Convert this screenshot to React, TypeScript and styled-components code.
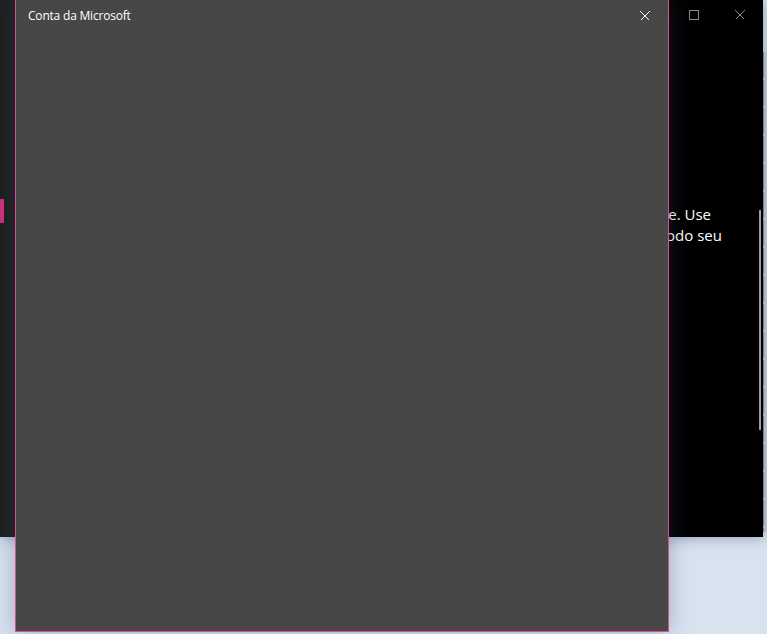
import React from "react";
import styled, { createGlobalStyle } from "styled-components";

const Global = createGlobalStyle`
  html, body { margin: 0; padding: 0; }
  body {
    width: 767px;
    height: 634px;
    overflow: hidden;
    background: #d9e3f0;
    font-family: "Open Sans", "Noto Sans", "DejaVu Sans", sans-serif;
  }
`;

const Desktop = styled.div`
  position: relative;
  width: 767px;
  height: 634px;
  overflow: hidden;
  background: #d9e3f0;
`;

const BackWindow = styled.div`
  position: absolute;
  left: 720px;
  top: 52px;
  width: 60px;
  height: 480px;
  background: #cfd3d8;
  display: flex;
  justify-content: flex-end;
  padding-right: 16px;
  box-sizing: border-box;
`;

const BackRail = styled.div`
  width: 2px;
  height: 100%;
  background: repeating-linear-gradient(
    to bottom,
    #8d9094 0px,
    #8d9094 26px,
    #d0d3d7 26px,
    #d0d3d7 28px
  );
`;

const SettingsWindow = styled.div`
  position: absolute;
  left: 0;
  top: 0;
  width: 763px;
  height: 537px;
  background: #000;
  display: flex;
  box-shadow: 0 0 14px rgba(40, 60, 90, 0.45);
`;

const Sidebar = styled.div`
  position: relative;
  width: 300px;
  background: #1f1f1f;
  flex-shrink: 0;
`;

const ActiveMarker = styled.div`
  position: absolute;
  left: 0;
  top: 199px;
  width: 4px;
  height: 24px;
  background: #d32f7b;
`;

const Content = styled.div`
  position: relative;
  flex: 1;
  display: flex;
  flex-direction: column;
`;

const TitleBar = styled.div`
  height: 30px;
  display: flex;
  justify-content: flex-end;
  align-items: center;
`;

const CaptionButton = styled.div`
  width: 46px;
  height: 30px;
  display: flex;
  align-items: center;
  justify-content: center;
`;

const Body = styled.div`
  padding-top: 174px;
  width: 422px;
  color: #fff;
  font-size: 15px;
  line-height: 21px;
`;

const Line = styled.div<{ $end: number }>`
  text-align: right;
  white-space: nowrap;
  padding-right: ${(p) => p.$end}px;
`;

const Scrollbar = styled.div`
  position: absolute;
  right: 2px;
  top: 210px;
  width: 2px;
  height: 220px;
  background: #9b9b9b;
`;

const Dialog = styled.div`
  position: absolute;
  left: 15px;
  top: -1px;
  width: 654px;
  height: 633px;
  box-sizing: border-box;
  background: #474747;
  border: 1px solid #dc4f8b;
  box-shadow: 0 0 22px rgba(50, 70, 100, 0.35);
  display: flex;
  flex-direction: column;
`;

const DialogTitleBar = styled.div`
  height: 31px;
  display: flex;
  align-items: center;
  justify-content: space-between;
  padding-left: 12px;
`;

const DialogTitle = styled.span`
  color: #fff;
  font-size: 12px;
  letter-spacing: -0.2px;
  margin-top: -1px;
`;

const DialogClose = styled.div`
  width: 46px;
  height: 31px;
  display: flex;
  align-items: center;
  justify-content: center;
`;

const CrossIcon = ({ color }: { color: string }) => (
  <svg width="10" height="10" viewBox="0 0 10 10" shapeRendering="crispEdges">
    <path d="M0.5 0.5 L9.5 9.5 M9.5 0.5 L0.5 9.5" stroke={color} strokeWidth="1" />
  </svg>
);

const SquareIcon = ({ color }: { color: string }) => (
  <svg width="10" height="10" viewBox="0 0 10 10" shapeRendering="crispEdges">
    <rect x="0.5" y="0.5" width="9" height="9" fill="none" stroke={color} strokeWidth="1" />
  </svg>
);

export default function App() {
  return (
    <>
      <Global />
      <Desktop>
        <BackWindow>
          <BackRail />
        </BackWindow>
        <SettingsWindow>
          <Sidebar>
            <ActiveMarker />
          </Sidebar>
          <Content>
            <TitleBar>
              <CaptionButton>
                <SquareIcon color="#8a8a8a" />
              </CaptionButton>
              <CaptionButton>
                <CrossIcon color="#8a8a8a" />
              </CaptionButton>
            </TitleBar>
            <Body>
              <Line $end={11}>sincronizados automaticamente. Use</Line>
              <Line $end={0}>entre dispositivos em todo seu</Line>
            </Body>
            <Scrollbar />
          </Content>
        </SettingsWindow>
        <Dialog>
          <DialogTitleBar>
            <DialogTitle>Conta da Microsoft</DialogTitle>
            <DialogClose>
              <CrossIcon color="#ffffff" />
            </DialogClose>
          </DialogTitleBar>
        </Dialog>
      </Desktop>
    </>
  );
}
